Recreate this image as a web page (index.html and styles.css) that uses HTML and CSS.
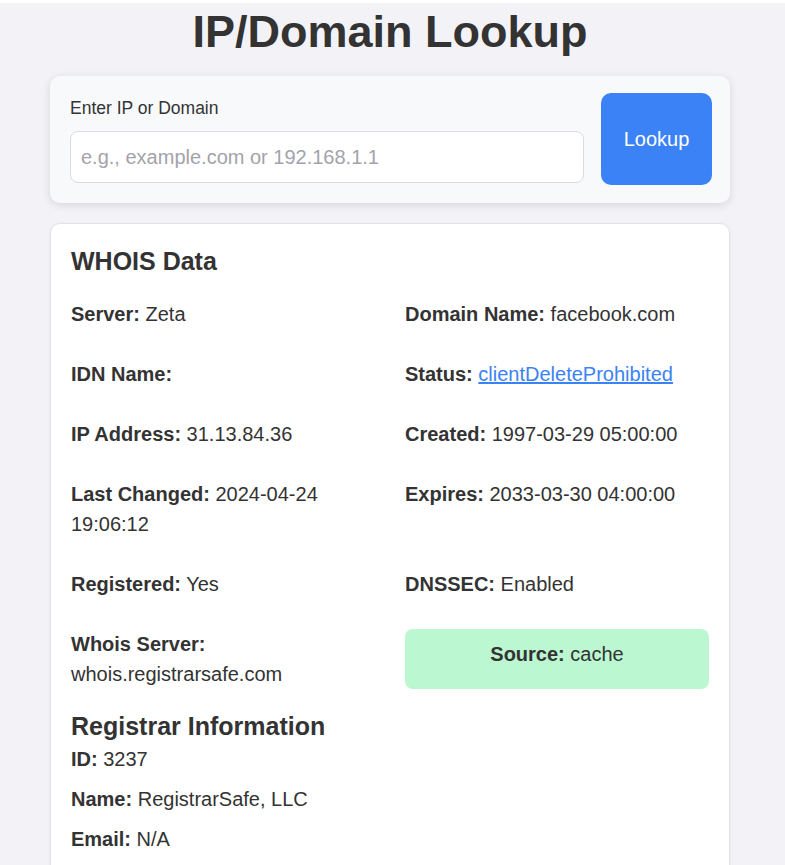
FILE: index.html
```html
<!DOCTYPE html>
<html lang="en">
<head>
<meta charset="utf-8">
<title>IP/Domain Lookup</title>
<link rel="stylesheet" href="styles.css">
</head>
<body>
<main class="page">
  <h1 class="title">IP/Domain Lookup</h1>

  <form class="search-card">
    <div class="search-field">
      <label class="search-label" for="q">Enter IP or Domain</label>
      <input class="search-input" id="q" type="text" placeholder="e.g., example.com or 192.168.1.1">
    </div>
    <button class="search-button" type="button">Lookup</button>
  </form>

  <section class="result-card">
    <h2 class="section-title">WHOIS Data</h2>
    <div class="data-grid">
      <div class="item"><strong>Server:</strong> Zeta</div>
      <div class="item"><strong>Domain Name:</strong> facebook.com</div>
      <div class="item"><strong>IDN Name:</strong></div>
      <div class="item"><strong>Status:</strong> <a class="link" href="#">clientDeleteProhibited</a></div>
      <div class="item"><strong>IP Address:</strong> 31.13.84.36</div>
      <div class="item"><strong>Created:</strong> 1997-03-29 05:00:00</div>
      <div class="item"><strong>Last Changed:</strong> 2024-04-24 19:06:12</div>
      <div class="item"><strong>Expires:</strong> 2033-03-30 04:00:00</div>
      <div class="item"><strong>Registered:</strong> Yes</div>
      <div class="item"><strong>DNSSEC:</strong> Enabled</div>
      <div class="item"><strong>Whois Server:</strong> whois.registrarsafe.com</div>
      <div class="item source"><strong>Source:</strong> cache</div>
    </div>

    <h2 class="section-title registrar-title">Registrar Information</h2>
    <div class="registrar-list">
      <div class="item"><strong>ID:</strong> 3237</div>
      <div class="item"><strong>Name:</strong> RegistrarSafe, LLC</div>
      <div class="item"><strong>Email:</strong> N/A</div>
    </div>
  </section>
</main>
</body>
</html>
```

FILE: styles.css
```css
html {
  background: #ffffff;
}

body {
  margin: 3px 0 0;
  background: #f3f3f7;
  font-family: "Liberation Sans", Arial, sans-serif;
  color: #333333;
  min-height: 900px;
}

.page {
  padding: 0 55px 40px 50px;
}

.title {
  margin: 3px 0 18px;
  font-size: 45px;
  line-height: 52px;
  font-weight: bold;
  text-align: center;
  color: #333333;
}

.search-card {
  display: flex;
  align-items: stretch;
  gap: 17px;
  margin: 0;
  padding: 17px 18px 18px 20px;
  background: #f8f9fb;
  border-radius: 10px;
  box-shadow: 0 2px 8px rgba(0, 0, 0, 0.12);
}

.search-field {
  flex: 1;
  display: flex;
  flex-direction: column;
}

.search-label {
  display: block;
  margin: 5px 0 13px;
  font-size: 17.5px;
  line-height: 20px;
  color: #333333;
}

.search-input {
  box-sizing: border-box;
  width: 100%;
  height: 52px;
  margin: 0;
  padding: 0 10px;
  border: 1px solid #dcdce0;
  border-radius: 8px;
  background: #ffffff;
  font-family: "Liberation Sans", Arial, sans-serif;
  font-size: 20px;
  color: #333333;
}

.search-input::placeholder {
  color: #a3a3ab;
}

.search-button {
  width: 111px;
  height: 92px;
  margin: 0;
  padding: 0;
  border: none;
  border-radius: 10px;
  background: #3b82f6;
  color: #ffffff;
  font-family: "Liberation Sans", Arial, sans-serif;
  font-size: 20px;
}

.result-card {
  margin-top: 20px;
  padding: 20px;
  background: #ffffff;
  border: 1px solid #e2e2e7;
  border-radius: 10px;
  box-shadow: 0 1px 4px rgba(0, 0, 0, 0.05);
}

.section-title {
  margin: 2px 0 23px;
  font-size: 25px;
  line-height: 30px;
  font-weight: bold;
  color: #333333;
}

.data-grid {
  display: grid;
  grid-template-columns: 1fr 1fr;
  column-gap: 30px;
  row-gap: 30px;
  align-items: start;
}

.item {
  font-size: 20px;
  line-height: 30px;
  color: #333333;
}

.item strong {
  font-weight: bold;
}

.link {
  color: #3b82f6;
  text-decoration: underline;
}

.source {
  padding: 10px 10px 20px;
  background: #bbf7d0;
  border-radius: 8px;
  text-align: center;
}

.registrar-title {
  margin: 22px 0 3px;
}

.registrar-list {
  display: flex;
  flex-direction: column;
  gap: 10px;
}
```
